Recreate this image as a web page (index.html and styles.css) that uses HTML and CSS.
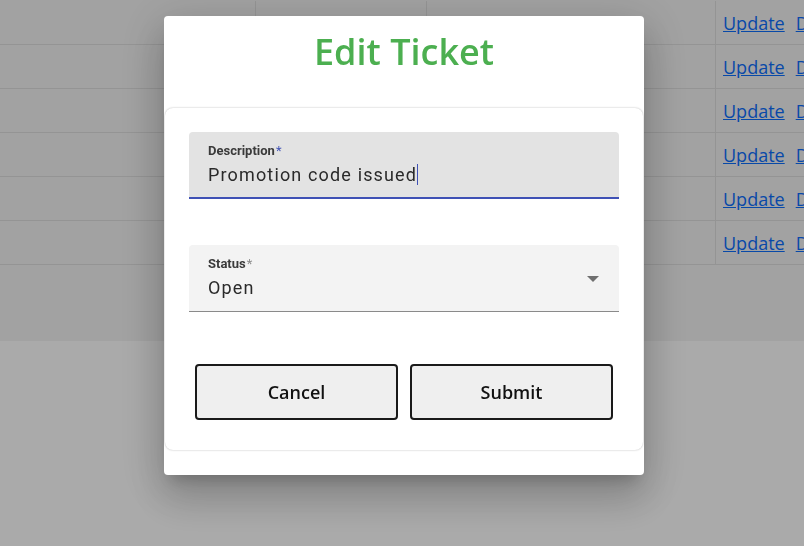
FILE: index.html
```html
<!DOCTYPE html>
<html>
<head>
<meta charset="utf-8">
<link rel="stylesheet" href="styles.css">
</head>
<body>
<div class="page">
  <div class="table">
    <div class="row"><div class="cell c1"></div><div class="cell c2"></div><div class="cell c3"></div><div class="cell c4"><a href="#">Update</a> <a href="#">Delete</a></div></div>
    <div class="row"><div class="cell c1"></div><div class="cell c2"></div><div class="cell c3"></div><div class="cell c4"><a href="#">Update</a> <a href="#">Delete</a></div></div>
    <div class="row"><div class="cell c1"></div><div class="cell c2"></div><div class="cell c3"></div><div class="cell c4"><a href="#">Update</a> <a href="#">Delete</a></div></div>
    <div class="row"><div class="cell c1"></div><div class="cell c2"></div><div class="cell c3"></div><div class="cell c4"><a href="#">Update</a> <a href="#">Delete</a></div></div>
    <div class="row"><div class="cell c1"></div><div class="cell c2"></div><div class="cell c3"></div><div class="cell c4"><a href="#">Update</a> <a href="#">Delete</a></div></div>
    <div class="row"><div class="cell c1"></div><div class="cell c2"></div><div class="cell c3"></div><div class="cell c4"><a href="#">Update</a> <a href="#">Delete</a></div></div>
  </div>
</div>
<div class="overlay"></div>
<div class="dialog">
  <h1 class="title">Edit Ticket</h1>
  <div class="card">
    <div class="field focused">
      <div class="label">Description<span class="star">*</span></div>
      <div class="value">Promotion code issued<span class="caret"></span></div>
    </div>
    <div class="field select">
      <div class="label">Status<span class="star">*</span></div>
      <div class="value">Open</div>
      <svg class="arrow" width="12" height="6" viewBox="0 0 12 6"><path d="M0 0 L12 0 L6 6 Z" fill="#6f6f6f"/></svg>
    </div>
    <div class="buttons">
      <button class="btn">Cancel</button>
      <button class="btn">Submit</button>
    </div>
  </div>
</div>
</body>
</html>
```
FILE: styles.css
```css
html, body {
  margin: 0;
  padding: 0;
  background: #ffffff;
  font-family: "Open Sans", "Noto Sans", sans-serif;
  overflow: hidden;
}
.page {
  width: 804px;
  height: 546px;
}
.table {
  background: #f3f3f3;
  height: 341px;
  padding-top: 1px;
  box-sizing: border-box;
}
.row {
  display: grid;
  grid-template-columns: 255px 171px 289px 1fr;
  height: 44px;
  border-bottom: 1px solid #dfdfdf;
  box-sizing: border-box;
}
.cell {
  display: flex;
  align-items: center;
}
.c2, .c3, .c4 {
  border-left: 1px solid #dfdfdf;
}
.c4 {
  padding-left: 7px;
  gap: 11px;
  white-space: nowrap;
  overflow: hidden;
}
.c4 a {
  color: #0d6efd;
  font-size: 18px;
  text-decoration: underline;
}
.overlay {
  position: fixed;
  inset: 0;
  background: rgba(0, 0, 0, 0.333);
}
.dialog {
  position: fixed;
  left: 164px;
  top: 16px;
  width: 480px;
  height: 459px;
  background: #ffffff;
  border-radius: 4px;
  box-shadow: 0px 11px 15px -7px rgba(0,0,0,0.2), 0px 24px 38px 3px rgba(0,0,0,0.14), 0px 9px 46px 8px rgba(0,0,0,0.12);
  display: flex;
  flex-direction: column;
  align-items: center;
}
.title {
  margin: 14px 0 0 0;
  height: 77px;
  font-size: 36px;
  font-weight: 600;
  color: #4caf50;
  line-height: 44px;
}
.card {
  width: 478px;
  height: 342px;
  margin-top: 1px;
  box-sizing: border-box;
  border-radius: 8px;
  box-shadow: 0 0 2px rgba(0,0,0,0.3);
  padding: 24px 24px 0 24px;
}
.field {
  position: relative;
  height: 67px;
  box-sizing: border-box;
  border-radius: 4px 4px 0 0;
  padding: 11px 19px 0 19px;
  font-family: Roboto, sans-serif;
}
.field.focused {
  background: #e3e3e3;
  border-bottom: 2px solid #3f51b5;
}
.field.select {
  margin-top: 46px;
  background: #f3f3f3;
  border-bottom: 1px solid #8a8a8a;
}
.label {
  font-size: 13px;
  font-weight: 700;
  color: #3a3a3a;
  line-height: 16px;
}
.focused .star {
  color: #3f51b5;
  font-weight: 400;
  margin-left: 1px;
}
.select .star {
  color: #8a8a8a;
  font-weight: 400;
  margin-left: 1px;
}
.value {
  font-size: 18px;
  color: #2a2a2a;
  letter-spacing: 1.15px;
  line-height: 26px;
  margin-top: 3px;
}
.caret {
  display: inline-block;
  width: 1px;
  height: 21px;
  background: #3f51b5;
  vertical-align: -4px;
  margin-left: 0px;
}
.arrow {
  position: absolute;
  right: 20px;
  top: 31px;
}
.buttons {
  display: flex;
  gap: 12px;
  margin: 52px 6px 0 6px;
}
.btn {
  flex: 1;
  height: 56px;
  background: #efefef;
  border: 2px solid #1a1a1a;
  border-radius: 4px;
  font-family: "Open Sans", "Noto Sans", sans-serif;
  font-size: 18px;
  font-weight: 600;
  color: #111;
}
```
